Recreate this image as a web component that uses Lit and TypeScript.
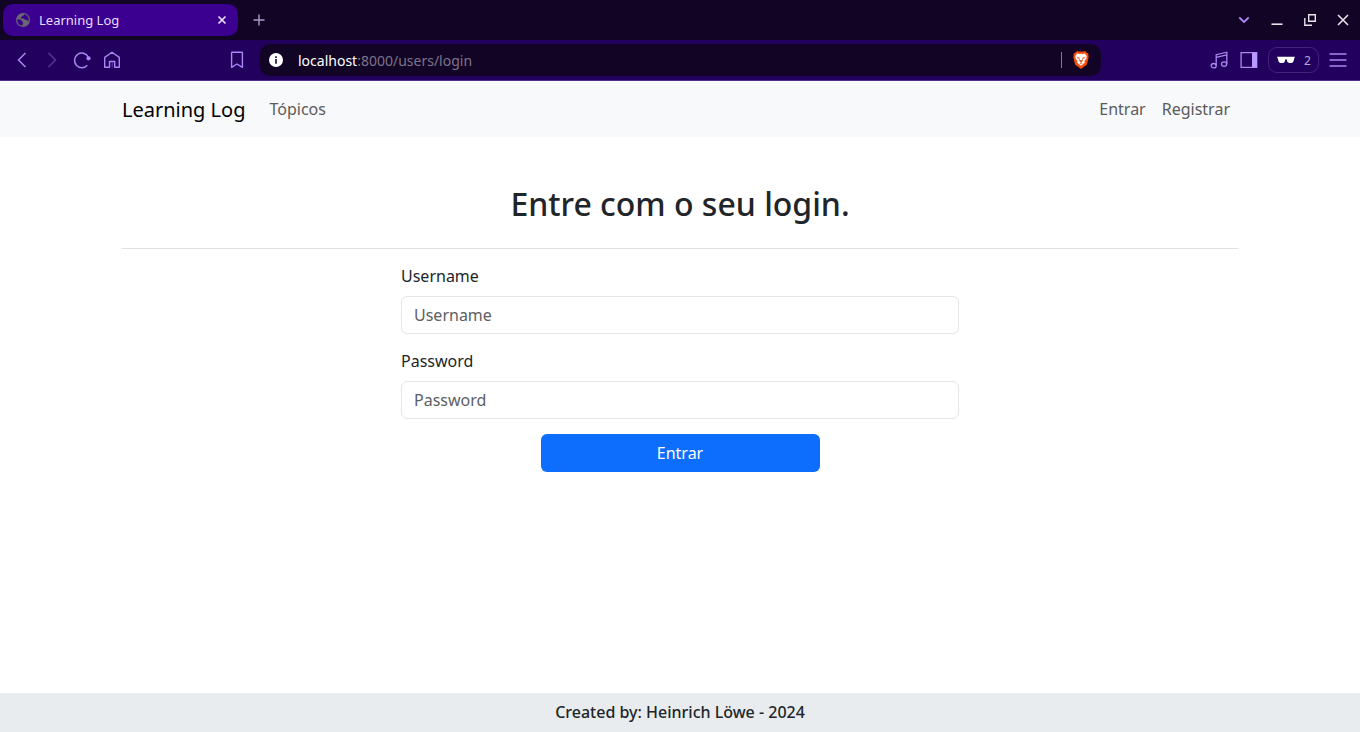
import { LitElement, html, css, svg } from "lit";
import { customElement } from "lit/decorators.js";

const icon = (w: number, h: number, body: unknown) => html`
  <svg width=${w} height=${h} viewBox="0 0 ${w} ${h}" fill="none" aria-hidden="true">${body}</svg>
`;

const globe = icon(14, 14, svg`
  <circle cx="7" cy="7" r="7" fill="#696770"/>
  <path d="M1.300 6.200 3 6.500l1.300.2c1 .1 1.400.8 1.500 1.500.1.700 1.100.5 1.300 1.200.2.800-.6 1-.6 1.700v1.700C3.300 12.500 1 9.700 1.300 6.200Z" fill="#3b0090"/>
  <path d="M8.300 1.300 7.500 2.600c-.4.600-.9.700-1.600.8-.6.100-.3.900-.8 1.200-.4.300-.1 1 .5 1h1.900c.8 0 1 1 1.500 1.200.8.300 1.800-.2 2.300.500l1.100 1.300c1-3.300-.7-6.600-4.100-7.300Z" fill="#3b0090"/>`);
const close = icon(10, 10, svg`<path d="m1.500 1.500 7 7M8.500 1.500l-7 7" stroke="#e9defc" stroke-width="1.700"/>`);
const plus = icon(12, 12, svg`<path d="M6 .5v11M.5 6h11" stroke="#a99bc9" stroke-width="1.400"/>`);
const back = icon(10, 16, svg`<path d="M8.500 1 1.500 8l7 7" stroke="#a987f4" stroke-width="1.500"/>`);
const forward = icon(10, 16, svg`<path d="m1.500 1 7 7-7 7" stroke="#593593" stroke-width="1.500"/>`);
const reload = icon(18, 18, svg`
  <path d="M14.300 14.200A7.300 7.300 0 1 1 15.300 6" stroke="#a987f4" stroke-width="1.500"/>
  <circle cx="15.500" cy="7.300" r="2.100" fill="#a987f4"/>`);
const home = icon(18, 18, svg`
  <path d="M1.700 6.400 9 1.300l7.300 5.100v9.900h-4.600v-5.800H6.500v5.800H1.700Z" stroke="#a987f4" stroke-width="1.400" stroke-linejoin="round"/>
  <path d="M9.200 11.500v5" stroke="#6840b5" stroke-width="1"/>`);
const bookmark = icon(14, 18, svg`<path d="M2.200 1.200h9.600q.6 0 .6.600v14.500L7 13l-5.400 3.300V1.800q0-.6.600-.6Z" stroke="#a987f4" stroke-width="1.400" stroke-linejoin="round"/>`);
const info = icon(14, 14, svg`
  <circle cx="7" cy="7" r="7" fill="#fff"/>
  <path d="M7 3.200v1.700M7 6v4.800" stroke="#241437" stroke-width="1.700"/>`);
const lion = icon(18, 20, svg`
  <path d="m5 1 1.400.6h5.200L13 1l1.800 1.800 1.500.8.300 3.800-1.700 7.100L9 19l-5.900-4.500L1.400 7.400l.3-3.800 1.500-.8Z" fill="#f84d0b"/>
  <path d="m5.200 3.500 2 .5L9 3.700l1.800.3 2-.5 1.900 2.600-.3 2.400-2 2.700.3 1.500L9 15.700l-3.700-3 .3-1.500-2-2.700-.3-2.400Z" fill="#fff"/>
  <path d="m4.500 6.600 3 .8.300 2.200L9 11l1.200-1.400.3-2.200 3-.8-1.200 2-1.500.6.400 1.600L9 12.200l-2.200-1.400.4-1.600-1.500-.6ZM7.300 13.100 9 12.300l1.700.8L9 14.300Z" fill="#f1783f"/>
  <path d="M7.700 10.600h2.600L9 11.900Z" fill="#62443e"/>`);
const chevron = icon(12, 8, svg`<path d="m1.300 1.500 4.700 4.500 4.700-4.500" stroke="#a987f4" stroke-width="1.800"/>`);
const minimize = icon(12, 12, svg`<path d="M.5 10.200h11" stroke="#e7e3ea" stroke-width="1.600"/>`);
const restore = icon(12, 12, svg`<path d="M4.700.700h6.600v6.600H4.700ZM.8 4v7.300H8" stroke="#e7e3ea" stroke-width="1.400"/>`);
const exit = icon(12, 12, svg`<path d="m1 1 10 10M11 1 1 11" stroke="#e7e3ea" stroke-width="1.600"/>`);
const music = icon(18, 18, svg`
  <path d="M6.200 14.200V3.700L16.800 1.200v11.500M6.200 6.300l10.600-2.500" stroke="#a987f4" stroke-width="1.300"/>
  <ellipse cx="3.700" cy="14.700" rx="2.500" ry="2.200" stroke="#a987f4" stroke-width="1.300"/>
  <ellipse cx="14.100" cy="13.100" rx="2.600" ry="2.200" stroke="#a987f4" stroke-width="1.300"/>`);
const panel = icon(18, 16, svg`
  <path d="M1.100.7h15.600v14.600H1.100Z" stroke="#a987f4" stroke-width="1.300"/>
  <path d="M12 .5h5v15h-5Z" fill="#b799ff"/>`);
const glasses = icon(18, 8, svg`<path d="M0 .8h18L17.300 2.300 16.500 5.200Q16 7 14.300 7h-2Q10.600 7 10.100 5.200L9.600 3.200H8.400l-.5 2Q7.400 7 5.700 7h-2Q2 7 1.500 5.200L.7 2.300Z" fill="#fff"/>`);
const menu = icon(18, 14, svg`<path d="M.5 1h17M.5 7h17M.5 13h17" stroke="#a987f4" stroke-width="1.400"/>`);

@customElement("browser-chrome")
export class BrowserChrome extends LitElement {
  static styles = css`
    :host { display: block; color: #e9defc; }
    svg { display: block; flex: none; }
    button {
      display: grid; place-items: center; padding: 0; border: 0;
      background: none; font: inherit; color: inherit; cursor: pointer;
    }
    .tabs { display: flex; align-items: center; height: 40px; padding: 0 1px 0 3px; background: #120425; }
    .tab {
      display: flex; align-items: center; box-sizing: border-box; width: 235px; height: 32px;
      padding: 0 8px 0 13px; border-radius: 10px; background: #3b0090; font-size: 13px; line-height: 21px;
    }
    .title { flex: 1; padding-left: 9px; }
    .tab-button { width: 16px; height: 16px; }
    .new-tab { width: 24px; height: 24px; margin-left: 9px; }
    .window { display: flex; margin-left: auto; }
    .window button { width: 33px; height: 32px; }
    .toolbar {
      display: flex; align-items: center; height: 40px; padding: 0 7px;
      background: #22005d; border-bottom: 1px solid #51318a;
    }
    .tool { width: 30px; height: 32px; flex: none; }
    .mark { margin-left: 95px; }
    .address {
      display: flex; align-items: center; flex: 1; height: 32px; box-sizing: border-box;
      margin: 0 103px 0 8px; padding: 0 11px 0 9px; border-radius: 10px;
      background: #120425; font-size: 14px; line-height: 21px;
    }
    .url { flex: 1; padding-left: 15px; color: #7d7489; }
    .host { color: #fff; }
    .divider { width: 1px; height: 16px; margin-right: 10px; background: #857c8f; }
    .private {
      display: flex; align-items: center; gap: 9px; box-sizing: border-box; width: 51px; height: 26px;
      margin: 0 4px; padding: 0 8px; border: 1px solid #442378; border-radius: 9px;
      color: #b9a5de; font-size: 12px;
    }
  `;

  render() {
    return html`
      <div class="tabs">
        <div class="tab">
          ${globe}<span class="title">Learning Log</span>
          <button class="tab-button" aria-label="Fechar aba">${close}</button>
        </div>
        <button class="new-tab" aria-label="Nova aba">${plus}</button>
        <div class="window">
          <button aria-label="Pesquisar abas">${chevron}</button>
          <button aria-label="Minimizar">${minimize}</button>
          <button aria-label="Restaurar">${restore}</button>
          <button aria-label="Fechar">${exit}</button>
        </div>
      </div>
      <div class="toolbar">
        <button class="tool" aria-label="Voltar">${back}</button>
        <button class="tool" aria-label="Avançar" disabled>${forward}</button>
        <button class="tool" aria-label="Recarregar">${reload}</button>
        <button class="tool" aria-label="Início">${home}</button>
        <button class="tool mark" aria-label="Favoritos">${bookmark}</button>
        <div class="address">
          <button aria-label="Informações do site">${info}</button>
          <span class="url"><span class="host">localhost</span>:8000/users/login</span>
          <span class="divider"></span>
          <button aria-label="Brave Shields">${lion}</button>
        </div>
        <button class="tool" aria-label="Mídia">${music}</button>
        <button class="tool" aria-label="Barra lateral">${panel}</button>
        <button class="private" aria-label="Janelas privadas: 2">${glasses}<span>2</span></button>
        <button class="tool" aria-label="Menu">${menu}</button>
      </div>
    `;
  }
}

@customElement("login-page")
export class LoginPage extends LitElement {
  static styles = css`
    :host {
      display: flex; flex-direction: column; flex: 1;
      background: #fff; color: #212529; font-size: 16px; line-height: 24px;
    }
    a { color: #5a5b5c; text-decoration: none; }
    .navbar { background: #f8f9fa; }
    .container { box-sizing: border-box; width: 100%; max-width: 1140px; margin: 0 auto; padding: 0 12px; }
    .nav { display: flex; align-items: center; height: 56px; }
    .brand { margin-right: 16px; color: #000; font-size: 20px; line-height: 31px; }
    .link { padding: 8px; }
    .account { display: flex; margin-left: auto; }
    main { flex: 1; }
    h1 {
      margin: 48px 0 0; padding-bottom: 25px; border-bottom: 1px solid #dee2e6;
      font-size: 32px; line-height: 38px; font-weight: 500; text-align: center;
    }
    form { display: flex; flex-direction: column; width: 50%; margin: 15px auto 0; }
    label { margin-bottom: 8px; }
    input {
      box-sizing: border-box; width: 100%; height: 38px; margin: 0 0 15px; padding: 6px 12px;
      border: 1px solid #e3e5e8; border-radius: 6px; background: #fff; color: #212529; font: inherit;
    }
    input::placeholder { color: #5c6064; opacity: 1; }
    .submit {
      align-self: center; width: 50%; height: 38px; padding: 0; border: 0; border-radius: 6px;
      background: #0d6efd; color: #fff; font: inherit; cursor: pointer;
    }
    footer { padding: 7px 12px 8px; background: #e9ecef; font-weight: 500; text-align: center; }
  `;

  render() {
    return html`
      <header class="navbar">
        <nav class="container nav">
          <a class="brand" href="#">Learning Log</a>
          <a class="link" href="#topicos">Tópicos</a>
          <div class="account">
            <a class="link" href="#entrar">Entrar</a>
            <a class="link" href="#registrar">Registrar</a>
          </div>
        </nav>
      </header>
      <main class="container">
        <h1>Entre com o seu login.</h1>
        <form @submit=${(e: Event) => e.preventDefault()}>
          <label for="username">Username</label>
          <input id="username" name="username" type="text" placeholder="Username" autocomplete="username">
          <label for="password">Password</label>
          <input id="password" name="password" type="password" placeholder="Password" autocomplete="current-password">
          <button class="submit" type="submit">Entrar</button>
        </form>
      </main>
      <footer>Created by: Heinrich Löwe - 2024</footer>
    `;
  }
}

@customElement("app-root")
export class AppRoot extends LitElement {
  static styles = css`
    :host {
      display: flex; flex-direction: column; min-height: 100vh;
      font-family: "Noto Sans", "Liberation Sans", sans-serif;
    }
  `;

  render() {
    return html`<browser-chrome></browser-chrome><login-page></login-page>`;
  }
}
